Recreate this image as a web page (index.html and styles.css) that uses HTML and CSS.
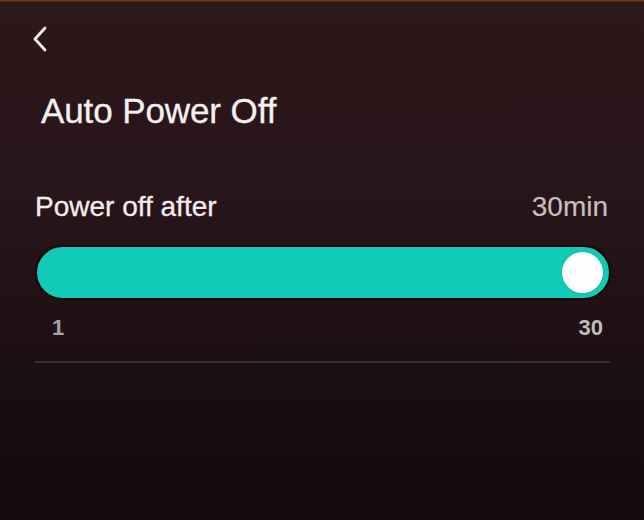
FILE: index.html
```html
<!DOCTYPE html>
<html lang="en">
<head>
<meta charset="utf-8">
<title>Auto Power Off</title>
<link rel="stylesheet" href="styles.css">
</head>
<body>
<div class="screen">
  <button class="back" aria-label="Back">
    <svg width="16" height="26" viewBox="0 0 16 26" fill="none" stroke="#f4efef" stroke-width="2.8" stroke-linecap="round" stroke-linejoin="round">
      <path d="M13 2 L3 13 L13 24"/>
    </svg>
  </button>
  <h1 class="title">Auto Power Off</h1>
  <div class="row">
    <span class="label">Power off after</span>
    <span class="value">30min</span>
  </div>
  <div class="slider">
    <div class="thumb"></div>
  </div>
  <div class="scale">
    <span class="min">1</span>
    <span class="max">30</span>
  </div>
  <div class="divider"></div>
</div>
</body>
</html>
```
FILE: styles.css
```css
html, body {
  margin: 0;
  padding: 0;
  height: 100%;
}
body {
  background: linear-gradient(180deg, #7a4520 0px, #3a1f16 2px, #2c171a 3px, #29161a 180px, #1c0f12 360px, #130a0c 520px);
  font-family: "Liberation Sans", Arial, sans-serif;
  color: #f3eeee;
}
.screen {
  display: flex;
  flex-direction: column;
  padding: 26px 33px 0 35px;
  box-sizing: border-box;
  height: 520px;
}
.back {
  display: block;
  width: 16px;
  height: 26px;
  padding: 0;
  margin: 0 0 0 -3px;
  background: none;
  border: none;
}
.back svg {
  display: block;
}
.title {
  margin: 39px 0 0 6px;
  font-size: 35px;
  line-height: 40px;
  font-weight: 400;
  letter-spacing: -0.1px;
  color: #f5f1f1;
  -webkit-text-stroke: 0.3px #f5f1f1;
}
.row {
  display: flex;
  justify-content: space-between;
  align-items: baseline;
  margin-top: 60px;
  font-size: 28px;
  line-height: 32px;
}
.label {
  color: #f2eded;
  -webkit-text-stroke: 0.3px #f2eded;
}
.value {
  color: #c6bebe;
  margin-right: 3px;
  -webkit-text-stroke: 0.2px #c6bebe;
}
.slider {
  margin-top: 22px;
  height: 55px;
  box-sizing: border-box;
  border: 2px solid #0c0607;
  border-radius: 28px;
  background: #12cab8;
  display: flex;
  align-items: center;
  justify-content: flex-end;
  padding-right: 6px;
}
.thumb {
  width: 41px;
  height: 41px;
  border-radius: 50%;
  background: #fdfdfd;
  box-shadow: 0 0 3px rgba(0, 0, 0, 0.15);
}
.scale {
  display: flex;
  justify-content: space-between;
  margin-top: 15px;
  font-size: 22px;
  line-height: 26px;
  font-weight: 700;
  color: #c3bcbc;
  padding: 0 8px 0 17px;
}
.scale .min {
  color: #aaa2a3;
}
.divider {
  margin-top: 20px;
  height: 2px;
  background: #3a2c30;
  margin-right: 1px;
}
```
